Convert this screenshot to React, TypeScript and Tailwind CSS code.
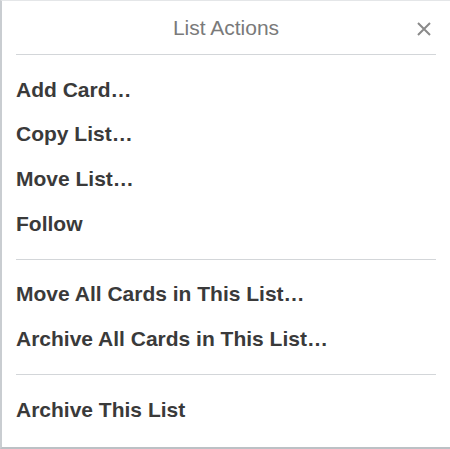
import React from "react";

const sections: string[][] = [
  ["Add Card…", "Copy List…", "Move List…", "Follow"],
  ["Move All Cards in This List…", "Archive All Cards in This List…"],
  ["Archive This List"],
];

export default function App() {
  return (
    <div
      className="w-[450px] h-[449px] bg-white border-t border-t-[#e4e6e8] border-l-2 border-l-[#c9cdd1] border-b-2 border-b-[#bcc1c5] overflow-hidden"
      style={{ fontFamily: '"Liberation Sans", Arial, sans-serif' }}
    >
      {/* header */}
      <div className="relative h-[53px] flex items-center justify-center">
        <span className="text-[21px] leading-[24px] text-[#7a7a7a] pt-[1px]">List Actions</span>
        <button className="absolute right-[18px] top-[20px] w-[16px] h-[16px] flex items-center justify-center text-[#8a8a8a]">
          <svg width="14" height="14" viewBox="0 0 14 14" fill="none" stroke="currentColor" strokeWidth="2">
            <path d="M1 1L13 13M13 1L1 13" />
          </svg>
        </button>
      </div>

      {sections.map((items, i) => (
        <div key={i}>
          <div className="mx-[14px] h-px bg-[#d3d6d9]" />
          <ul className="py-[12.5px]">
            {items.map((label) => (
              <li
                key={label}
                className="px-[14px] py-[10.33px] text-[21px] leading-[24px] font-bold text-[#3a3a3a] cursor-pointer"
              >
                {label}
              </li>
            ))}
          </ul>
        </div>
      ))}
    </div>
  );
}
